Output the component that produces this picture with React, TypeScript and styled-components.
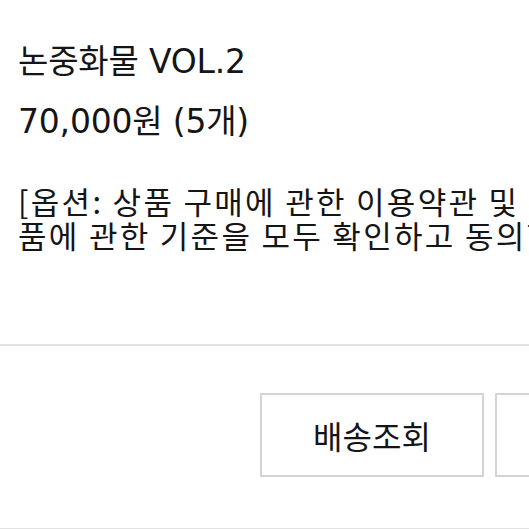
import React from "react";
import { styled, createGlobalStyle } from "styled-components";

const GlobalStyle = createGlobalStyle`
  html, body {
    margin: 0;
    padding: 0;
    background: #ffffff;
    overflow: hidden;
  }
  body {
    font-family: "DejaVu Sans", "Noto Sans CJK KR", sans-serif;
    color: #151515;
  }
`;

const Page = styled.div`
  width: 737px;
  background: #fff;
`;

const InfoSection = styled.section`
  padding: 40px 18px 92px;
  border-bottom: 2px solid #e2e2e2;
`;

const Title = styled.div`
  font-size: 33px;
  line-height: 44px;
  font-weight: 400;
  letter-spacing: -0.2px;
`;

const Price = styled(Title)`
  margin-top: 16px;
`;

const OptionText = styled.p`
  margin: 40px 0 0;
  width: 548px;
  max-height: 68px;
  overflow: hidden;
  font-family: "Noto Sans CJK KR", sans-serif;
  font-size: 31px;
  line-height: 34px;
  letter-spacing: 2.3px;
  color: #151515;
`;

const ButtonRow = styled.div`
  display: flex;
  justify-content: flex-end;
  gap: 11px;
  padding: 47px 18px 51px;
  border-bottom: 1px solid #e2e2e2;
`;

const ActionButton = styled.button`
  width: 224px;
  height: 84px;
  background: #fff;
  border: 2px solid #d4d4d4;
  font-family: "Noto Sans CJK KR", sans-serif;
  font-size: 32px;
  color: #151515;
  cursor: pointer;
`;

export default function App() {
  return (
    <Page>
      <GlobalStyle />
      <InfoSection>
        <Title>논중화물 VOL.2</Title>
        <Price>70,000원 (5개)</Price>
        <OptionText>
          [옵션: 상품 구매에 관한 이용약관 및 상품에 관한 기준을 모두 확인하고 동의합니다.]
        </OptionText>
      </InfoSection>
      <ButtonRow>
        <ActionButton>배송조회</ActionButton>
        <ActionButton>구매확정</ActionButton>
      </ButtonRow>
    </Page>
  );
}
